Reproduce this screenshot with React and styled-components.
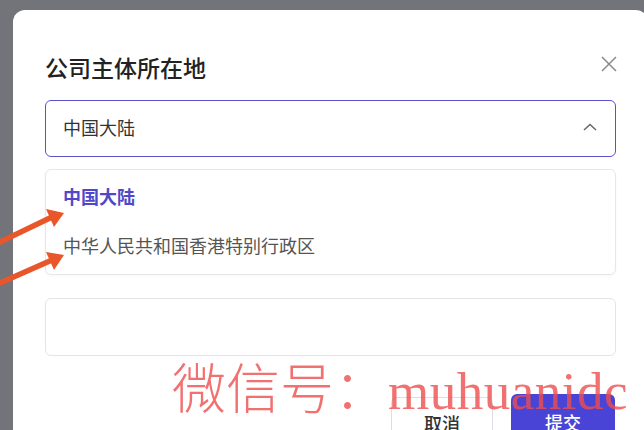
import React from "react";
import styled, { createGlobalStyle } from "styled-components";

const GlobalStyle = createGlobalStyle`
  html, body {
    margin: 0;
    padding: 0;
    width: 644px;
    height: 430px;
    overflow: hidden;
    background: #737479;
  }
  body {
    font-family: "Noto Sans CJK SC", "Noto Sans", sans-serif;
  }
`;

const Page = styled.div`
  position: relative;
  width: 644px;
  height: 430px;
  padding: 10px 0 0 13px;
  box-sizing: border-box;
  overflow: hidden;
`;

const Modal = styled.div`
  width: 635px;
  height: 460px;
  background: #fff;
  border-radius: 12px;
  box-sizing: border-box;
  padding: 41px 32px 0 32px;
  display: flex;
  flex-direction: column;
`;

const Header = styled.div`
  display: flex;
  justify-content: space-between;
  align-items: flex-start;
  height: 32px;
  margin-bottom: 17px;
`;

const Title = styled.h2`
  margin: 0;
  font-size: 23px;
  line-height: 32px;
  font-weight: 500;
  color: #222;
`;

const CloseButton = styled.button`
  border: 0;
  background: none;
  padding: 0;
  margin: 3px -2px 0 0;
  width: 19px;
  height: 19px;
  display: flex;
  align-items: center;
  justify-content: center;
  cursor: pointer;
`;

const Field = styled.div`
  height: ${(p) => p.$h}px;
  box-sizing: border-box;
  border: ${(p) => (p.$active ? "1.5px solid #5a52c9" : "1px solid #e3e3e8")};
  border-radius: 6px;
  display: flex;
  align-items: center;
  justify-content: space-between;
  padding: 0 18px 3px 17px;
  margin-bottom: ${(p) => p.$mb}px;
`;

const Value = styled.span`
  font-size: 18px;
  color: #333;
`;

const Dropdown = styled.ul`
  list-style: none;
  margin: 0 0 23px 0;
  padding: 1px 0 7px 0;
  border: 1px solid #e6e6eb;
  border-radius: 6px;
  box-sizing: border-box;
  height: 106px;
  box-shadow: 0 1px 3px rgba(0, 0, 0, 0.04);
`;

const Option = styled.li`
  height: 49px;
  display: flex;
  align-items: center;
  padding: 0 17px;
  font-size: 18px;
  color: ${(p) => (p.$selected ? "#5048c9" : "#555")};
  font-weight: ${(p) => (p.$selected ? 700 : 400)};
`;

const Footer = styled.div`
  display: flex;
  justify-content: flex-end;
  gap: 18px;
  margin-top: 38px;
  padding-right: 1px;
`;

const Button = styled.button`
  width: ${(p) => (p.$primary ? 104 : 102)}px;
  height: 46px;
  margin-top: ${(p) => (p.$primary ? 0 : 3)}px;
  border-radius: 6px;
  border: ${(p) => (p.$primary ? "none" : "1px solid #dcdce2")};
  background: ${(p) => (p.$primary ? "#4a44d6" : "#fff")};
  color: ${(p) => (p.$primary ? "#fff" : "#333")};
  font-family: inherit;
  font-size: 18px;
  font-weight: 500;
  padding-top: ${(p) => (p.$primary ? 10 : 6)}px;
`;

const Arrows = styled.svg`
  position: absolute;
  left: 0;
  top: 200px;
  pointer-events: none;
`;

const Watermark = styled.div`
  position: absolute;
  left: 172px;
  top: 359px;
  white-space: nowrap;
  color: rgba(238, 78, 78, 0.8);
  line-height: 1;
  pointer-events: none;
`;

const Cjk = styled.span`
  font-family: "Noto Sans CJK SC", sans-serif;
  font-size: 54px;
  font-weight: 300;
`;

const Latin = styled.span`
  font-family: "Liberation Serif", serif;
  font-size: 53px;
  letter-spacing: 0.5px;
`;

function XIcon() {
  return (
    <svg width="16" height="16" viewBox="0 0 16 16">
      <path d="M1 1 L15 15 M15 1 L1 15" stroke="#8a8a8e" strokeWidth="1.5" fill="none" />
    </svg>
  );
}

function ChevronUp() {
  return (
    <svg width="14" height="8" viewBox="0 0 14 8">
      <path d="M1 7 L7 1.5 L13 7" stroke="#666" strokeWidth="1.5" fill="none" />
    </svg>
  );
}

export default function App() {
  return (
    <>
      <GlobalStyle />
      <Page>
        <Modal>
          <Header>
            <Title>公司主体所在地</Title>
            <CloseButton aria-label="close">
              <XIcon />
            </CloseButton>
          </Header>
          <Field $active $h={57} $mb={12}>
            <Value>中国大陆</Value>
            <ChevronUp />
          </Field>
          <Dropdown>
            <Option $selected>中国大陆</Option>
            <Option>中华人民共和国香港特别行政区</Option>
          </Dropdown>
          <Field $h={58} $mb={0} />
          <Footer>
            <Button>取消</Button>
            <Button $primary>提交</Button>
          </Footer>
        </Modal>
        <Arrows width="80" height="90" viewBox="0 0 80 90">
          <g fill="#e8562a" stroke="#e8562a">
            <line x1="-2" y1="43" x2="52" y2="17" strokeWidth="5.5" />
            <polygon points="64,13 46,9 54,27" stroke="none" />
            <line x1="-2" y1="84" x2="52" y2="60" strokeWidth="5.5" />
            <polygon points="64,55 46,52 54,70" stroke="none" />
          </g>
        </Arrows>
        <Watermark>
          <Cjk>微信号：</Cjk>
          <Latin>muhuanidc</Latin>
        </Watermark>
      </Page>
    </>
  );
}
